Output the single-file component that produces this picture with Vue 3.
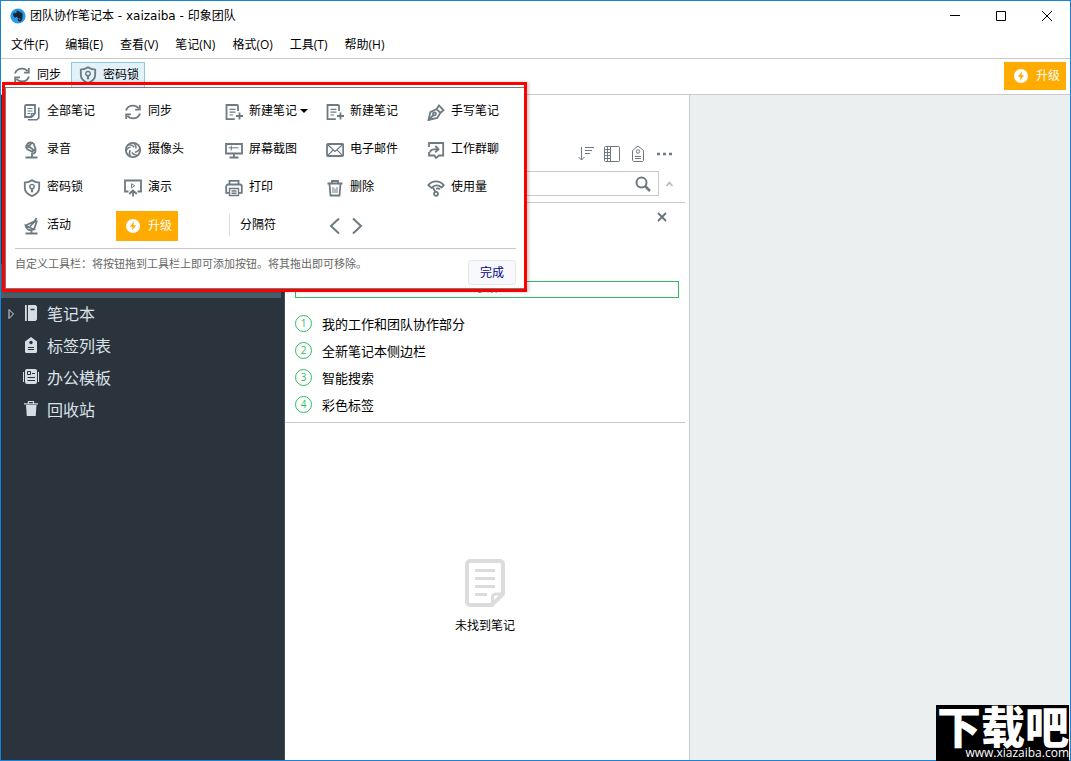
<script setup>
import { h } from 'vue'

const menus = ['文件(F)', '编辑(E)', '查看(V)', '笔记(N)', '格式(O)', '工具(T)', '帮助(H)']

const art = {
  notes: '<path d="M2 14V3.500a1.500 1.500 0 0 1 1.500-1.500h8.500v8.500l-3.500 3.500z"/><path d="M4.800 16.800h9l2-2V4.500" stroke-width="1.600"/><path d="M4.500 5.500h5M4.500 8h5M4.500 10.500h2.500M8.300 14v-3.500h3.500" stroke-width="1.200"/>',
  sync: '<path d="M2 7.500C3 4.500 5.800 2.600 9 2.600c2.400 0 4.300 1 5.600 2.700M16 10.500c-1 3-3.800 4.900-7 4.900-2.400 0-4.300-1-5.600-2.700"/><path d="M15.800 2v4.700h-4.700M2.200 16v-4.700h4.700"/>',
  addnote: '<path d="M13 8V3a1 1 0 0 0-1-1H1.500v14.200h8.300"/><path d="M4.500 6.300h6M4.500 9.200h6M4.500 12h3.500" stroke-width="1.200"/><path d="M14.500 9.500v7M11 13h7"/>',
  pen: '<path d="M1.500 17 3.300 9.200 9.600 6l3.800 3.800L10.200 15z"/><path d="m9.600 6 2.400-3.500 4.500 4.600-3.100 2.700M1.500 17l5-5"/><circle cx="7.500" cy="10.800" r="1.500"/>',
  mic: '<path d="M4 3.500C5.500 1 9 .8 10.800 3l1.700 5-3.200 2.700-5-2.500C3 7 3 5 4 3.500z"/><path d="m4 3.800 6.500 5.200M8.700 1.800l-4.200 5M12.300 8.500c.9 2.200-.3 4-3.300 4.200v4M2.500 16.500h12"/>',
  camera: '<circle cx="9" cy="9" r="7.200"/><path d="M9 1.800c2.300 1.300 3.300 3 3 5.700M15.800 7c-.8 2.500-2.200 3.800-4.900 4.200M13.800 14.200c-2.600.4-4.400-.5-6-2.700M6.500 15.700c-1.500-2.200-1.600-4.100-.3-6.500M2 10.500c.6-2.600 1.800-4 4.500-4.600M4 4c2.500-.6 4.500 0 6.200 2.200" stroke-width="1.500"/>',
  screen: '<path d="M1 3h16v9.500H1zM9 12.500v4M4.500 16.500h9"/><path d="M3.500 6.800h10M6.300 4.600v5" stroke-width="1"/>',
  mail: '<rect x="1" y="3" width="16.200" height="12" rx="1"/><path d="m2 4 7 6.500L16.200 4M2 14.200l5-5M16.200 14.200l-5-5" stroke-width="1.200"/>',
  chat: '<path d="M2 6V2h14.200v12.500h-4L9 17l-1.500-2.500H2V11"/><path d="M3 11.500c.2-2.500 2.500-3.500 7.500-3.300M8.300 5l3.200 3.200-3.200 3.200"/>',
  lock: '<path d="M9 1.200c2.200 1.600 4.500 2.200 7.200 2.400v5.200c0 4-3 6.700-7.200 8.300-4.200-1.600-7.200-4.300-7.200-8.300V3.600C4.500 3.400 6.800 2.800 9 1.200z"/><circle cx="9" cy="7.600" r="2.200" stroke-width="1.400"/><path d="M9 9.500v3.800" stroke-width="2.200"/>',
  present: '<path d="M4.500 12.500H1V1.500h16v11h-3.500"/><path d="M7.500 4.700v4.200l3.300-2.100z" stroke-width="1"/><path d="M9 17.500v-5.500M5.200 15 9 11.500l3.800 3.500"/>',
  print: '<path d="M4.500 5.500V1.800h9v3.700M4 13.800H1.200V7.500c0-1.200.8-2 2-2h11.600c1.200 0 2 .8 2 2v6.300H14"/><path d="M4.500 9.500h9v7h-9zM6.500 12h5M6.500 14.200h5" stroke-width="1.400"/>',
  trash: '<path d="M1.500 4.500h15M6 4.200V2h6v2.200M3.500 5l1 11.500h9l1-11.500"/><path d="M7 8v6M9 9.500V14M11 8v6" stroke-width="1"/>',
  usage: '<path d="M1.300 6.200C5.500 1.200 12.500 1.200 16.700 6.200l-2 2.300C11 5.500 8 5.500 4.500 8.800zM5.500 8l3 5M9 9.800c1.500-.6 2.700-.5 4 .5"/><circle cx="9" cy="14.800" r="2"/>',
  dish: '<path d="M2.500 8.500C3 12.500 6.500 14 11 12.500zM2.500 8.500 12 4M11 12.500l3-9M11 5.500 13.500 1M7 9.500l6-6.500M8.500 13v3.500M2.500 16.500h12"/>',
  bolt: '<circle cx="9" cy="9" r="7" fill="#fff" stroke="none"/><path d="M10 4.500 5.800 9.800h2.700L8 13.500l4.200-5.300H9.500z" fill="#ffab00" stroke="none"/>'
}

const Icon = (props) =>
  h('svg', {
    class: 'icon', viewBox: '0 0 18 18', width: 18, height: 18, fill: 'none',
    stroke: 'currentColor', 'stroke-width': 1.8, 'aria-hidden': 'true', innerHTML: art[props.name]
  })
Icon.props = ['name']

const tools = [
  { icon: 'notes', label: '全部笔记' },
  { icon: 'sync', label: '同步' },
  { icon: 'addnote', label: '新建笔记', drop: true },
  { icon: 'addnote', label: '新建笔记' },
  { icon: 'pen', label: '手写笔记' },
  { icon: 'mic', label: '录音' },
  { icon: 'camera', label: '摄像头' },
  { icon: 'screen', label: '屏幕截图' },
  { icon: 'mail', label: '电子邮件' },
  { icon: 'chat', label: '工作群聊' },
  { icon: 'lock', label: '密码锁' },
  { icon: 'present', label: '演示' },
  { icon: 'print', label: '打印' },
  { icon: 'trash', label: '删除' },
  { icon: 'usage', label: '使用量' },
  { icon: 'dish', label: '活动' }
]

const features = ['我的工作和团队协作部分', '全新笔记本侧边栏', '智能搜索', '彩色标签']
</script>

<template>
  <div class="window">
    <header class="titlebar">
      <svg class="logo" viewBox="0 0 16 16" width="16" height="16" aria-hidden="true">
        <circle cx="8" cy="8" r="7.600" fill="#249cf2" />
        <path d="M5.300 3.300 3 5.800c.3 2.300.8 3.600 2 3.800 1 .2 1.600-.2 1.800-.8.2 1 .9 1.200 2 1.200 1.300.1 1.600.7 1.500 1.700H9.200c-.4-.7-.1-1.200.6-1.200-1.300-.5-2.200.3-2 1.500.2 1.300 1.300 1.700 2.500 1.500 2-.3 2.500-4 2.200-7.500-.1-1.300-1-1.600-2.200-1.700C9.500 3.200 8 2.600 6.500 2.800v2.400H4.200z" fill="#1d2630" />
      </svg>
      <h1>团队协作笔记本 - xaizaiba - 印象团队</h1>
      <div class="controls">
        <button aria-label="最小化"><svg width="12" height="12" viewBox="0 0 12 12"><path d="M1 5.500h10" /></svg></button>
        <button aria-label="最大化"><svg width="12" height="12" viewBox="0 0 12 12"><path d="M1.500 1.500h9v9h-9z" /></svg></button>
        <button aria-label="关闭"><svg width="12" height="12" viewBox="0 0 12 12"><path d="m1 1 10 10M11 1 1 11" /></svg></button>
      </div>
    </header>

    <nav class="menubar">
      <button v-for="m in menus" :key="m">{{ m }}</button>
    </nav>

    <div class="toolbar">
      <button class="tool"><Icon name="sync" />同步</button>
      <button class="tool active"><Icon name="lock" />密码锁</button>
      <button class="upgrade"><Icon name="bolt" />升级</button>
    </div>

    <main class="body">
      <nav class="sidebar">
        <div class="selected"></div>
        <a href="#">
          <svg class="twisty" width="7" height="12" viewBox="0 0 7 12"><path d="M1 1.500 5.500 6 1 10.500z" fill="none" stroke="#d0d8de" /></svg>
          <svg class="glyph" width="16" height="18" viewBox="0 0 16 18"><path d="M2 1h1.800v16H2zM5 1h7.500L14 2.500v13L12.500 17H5z" fill="#d5dde3" /><path d="M7.500 5.500h4" stroke="#2b333d" stroke-width="1.500" /></svg>笔记本</a>
        <a href="#">
          <svg class="glyph" width="16" height="18" viewBox="0 0 16 18"><path d="m8 1 6 4.500V16l-1 1H3l-1-1V5.500z" fill="#d5dde3" /><circle cx="8" cy="6.500" r="1.700" fill="#2b333d" /><path d="M5 11.500h6M5 13.500h6" stroke="#2b333d" /></svg>标签列表</a>
        <a href="#">
          <svg class="glyph" width="16" height="18" viewBox="0 0 16 18"><rect x="2" y="1" width="12" height="15" rx="2" fill="#d5dde3" /><path d="M.5 4v10M15.500 4v10" stroke="#d5dde3" /><path d="M4.500 3.500h3v3h-3zM9 5.500h3M4.500 9.500h7.500M4.500 12.500h7.500" fill="none" stroke="#2b333d" /></svg>办公模板</a>
        <a href="#">
          <svg class="glyph" width="16" height="18" viewBox="0 0 16 18"><path d="M3 5h10.500l-.8 11H3.800z" fill="#d5dde3" /><path d="M1 3.800h14M5.500 3.500V1.500h5v2" fill="none" stroke="#d5dde3" stroke-width="1.200" /></svg>回收站</a>
      </nav>

      <section class="notes">
        <div class="listbar">
          <button aria-label="排序"><svg width="18" height="18" viewBox="0 0 18 18"><path d="M4.500 2v13M1.500 12l3 3 3-3M8 2.500h9M8 5.500h7M8 8.500h5" /></svg></button>
          <button aria-label="视图"><svg width="18" height="18" viewBox="0 0 18 18"><rect x="1.500" y="1.500" width="15" height="15" rx="1" /><path d="M7.500 1.500v15M4.500 1.500v15M1.500 4.500h6M1.500 7.500h6M1.500 10.500h6M1.500 13.500h6" /></svg></button>
          <button aria-label="标签"><svg width="18" height="18" viewBox="0 0 18 18"><path d="m9 1 5.500 4.500v10l-1 1h-9l-1-1v-10z" /><circle cx="9" cy="6.500" r="1.700" /><path d="M6 11.500h6M6 13.500h6" /></svg></button>
          <button aria-label="更多"><svg width="18" height="18" viewBox="0 0 18 18"><path d="M2 9h3M8 9h3M14 9h3" stroke-width="2.500" /></svg></button>
        </div>
        <div class="searchrow">
          <label class="search">
            <input type="text" aria-label="搜索笔记" />
            <svg width="18" height="18" viewBox="0 0 18 18"><circle cx="7.500" cy="7.500" r="5" fill="none" stroke="#6d7a82" stroke-width="2" /><path d="m11 11 5 5" stroke="#6d7a82" stroke-width="2.500" /></svg>
          </label>
          <button aria-label="收起"><svg width="9" height="8" viewBox="0 0 9 8"><path d="m1.500 6 3-3.500 3 3.500" fill="none" stroke="#b3b8bb" stroke-width="1.500" /></svg></button>
        </div>
        <div class="guide">
          <button class="close" aria-label="关闭"><svg width="12" height="12" viewBox="0 0 12 12"><path d="m2 2 8 8M10 2l-8 8" stroke="#66737b" stroke-width="1.800" /></svg></button>
          <button class="learn">了解</button>
          <ol>
            <li v-for="(f, i) in features" :key="f"><span class="num">{{ i + 1 }}</span>{{ f }}</li>
          </ol>
        </div>
        <div class="empty">
          <svg width="40" height="48" viewBox="0 0 40 48" fill="none" stroke="#dcdcdc" stroke-width="4"><path d="M27 46H5a3 3 0 0 1-3-3V5a3 3 0 0 1 3-3h30a3 3 0 0 1 3 3v30z" /><path d="M27.500 46V38a3 3 0 0 1 3-3H38" stroke-width="3" /><path d="M10 11.500h20M10 19.500h20M10 27.500h20M10 35.500h12" stroke-width="3" /></svg>
          <p>未找到笔记</p>
        </div>
      </section>

      <section class="detail"></section>
    </main>

    <div class="frame">
      <section class="customize">
        <div class="palette">
          <button v-for="(t, i) in tools" :key="i" class="item">
            <Icon :name="t.icon" />{{ t.label }}<i v-if="t.drop" class="caret"></i>
          </button>
          <button class="upgrade"><Icon name="bolt" />升级</button>
          <button class="item divider">分隔符</button>
          <div class="arrows">
            <button aria-label="后退"><svg width="11" height="18" viewBox="0 0 11 18"><path d="M10 1.500 2 9l8 7.500" /></svg></button>
            <button aria-label="前进"><svg width="11" height="18" viewBox="0 0 11 18"><path d="M1 1.500 9 9l-8 7.500" /></svg></button>
          </div>
        </div>
        <footer>
          <p>自定义工具栏：将按钮拖到工具栏上即可添加按钮。将其拖出即可移除。</p>
          <button class="done">完成</button>
        </footer>
      </section>
    </div>

    <div class="watermark">
      <strong>下载吧</strong>
      <span>www.xiazaiba.com</span>
    </div>
  </div>
</template>

<style>
body {
  margin: 0;
}
</style>

<style scoped>
* {
  box-sizing: border-box;
}
.window {
  position: relative;
  display: flex;
  flex-direction: column;
  min-height: 100vh;
  border: 1px solid #1883d7;
  background: #fff;
  color: #000;
  font: 12px/18px "Open Sans", "Noto Sans CJK SC", sans-serif;
}
button {
  display: flex;
  align-items: center;
  padding: 0;
  border: 0;
  background: none;
  color: inherit;
  font: inherit;
  white-space: nowrap;
}
svg {
  flex: none;
  display: block;
}
.titlebar {
  display: flex;
  align-items: center;
  height: 29px;
  padding-left: 9px;
}
.titlebar h1 {
  margin: 0 0 0 4px;
  font: 400 12px/18px "DejaVu Sans", "Noto Sans CJK SC", sans-serif;
}
.controls {
  display: flex;
  margin-left: auto;
}
.controls button {
  justify-content: center;
  width: 46px;
  height: 29px;
}
.controls path {
  fill: none;
  stroke: #000;
}
.menubar {
  display: flex;
  gap: 17px;
  height: 29px;
  padding: 2px 0 0 10px;
  border-bottom: 1px solid #c9c9c9;
}
.toolbar {
  display: flex;
  align-items: flex-start;
  height: 36px;
  padding: 3px 4px 0;
  border-bottom: 1px solid #c9c9c9;
}
.icon {
  color: #6d7a82;
}
.tool {
  gap: 6px;
  height: 26px;
  padding: 0 7px;
  border: 1px solid transparent;
}
.tool.active {
  margin-left: 2px;
  padding: 0 5px 0 7px;
  border-color: #8ccae4;
  background: #e3f1f9;
}
.upgrade {
  gap: 6px;
  height: 28px;
  padding: 0 6px 0 8px;
  background: #ffab00;
  color: #fff;
}
.toolbar .upgrade {
  margin-left: auto;
}
.body {
  display: flex;
  flex: 1;
}
.sidebar {
  flex: none;
  width: 284px;
  padding-top: 169px;
  border-right: 1px solid #47515c;
  background: #2b333d;
}
.selected {
  height: 34px;
  margin-right: 3px;
  background: #495d68;
}
.sidebar a {
  position: relative;
  display: flex;
  align-items: center;
  gap: 8px;
  height: 32px;
  padding-left: 22px;
  color: #dbe2e7;
  font-size: 16px;
  text-decoration: none;
}
.glyph {
  margin-bottom: 2px;
}
.twisty {
  position: absolute;
  left: 7px;
}
.notes {
  display: flex;
  flex: none;
  flex-direction: column;
  width: 405px;
  border-right: 1px solid #c9c9c9;
}
.listbar {
  display: flex;
  justify-content: flex-end;
  gap: 8px;
  padding: 50px 16px 8px 0;
}
.listbar svg {
  fill: none;
  stroke: #6d7a82;
}
.searchrow {
  display: flex;
  margin-right: 4px;
  padding: 0 11px 6px 10px;
  border-bottom: 1px solid #c9c9c9;
}
.search {
  display: flex;
  flex: 1;
  align-items: center;
  height: 25px;
  margin-right: 6px;
  padding-right: 6px;
  border: 1px solid #c9c9c9;
}
.search input {
  flex: 1;
  min-width: 0;
  border: 0;
  outline: 0;
  background: none;
  font: inherit;
}
.guide {
  display: flex;
  flex-direction: column;
  margin-right: 4px;
  padding: 8px 6px 4px 10px;
  border-bottom: 1px solid #c9c9c9;
}
.close {
  align-self: flex-end;
  margin-right: 11px;
}
.learn {
  justify-content: center;
  height: 17px;
  margin: 58px 0 12px;
  padding-bottom: 4px;
  border: 1px solid #2dbe60;
  color: #2dbe60;
}
.guide ol {
  margin: 0;
  padding: 0;
  list-style: none;
}
.guide li {
  display: flex;
  align-items: center;
  gap: 10px;
  height: 27px;
  font-size: 13px;
}
.num {
  width: 17px;
  height: 17px;
  border: 1px solid #2dbe60;
  border-radius: 50%;
  color: #2dbe60;
  font-size: 10px;
  line-height: 15px;
  text-align: center;
}
.empty {
  display: flex;
  flex-direction: column;
  align-items: center;
  gap: 10px;
  margin-right: 4px;
  padding-top: 136px;
}
.empty p {
  margin: 0;
}
.detail {
  flex: 1;
  background: #ebeff0;
}
.frame {
  position: absolute;
  top: 81px;
  left: 1px;
  width: 525px;
  padding-top: 2px;
  border: 3px solid #f00;
  box-shadow: 2px 0 3px rgba(0, 0, 0, 0.2);
}
.customize {
  padding: 4px 8px 3px 9px;
  border: 1px solid #7a7a7a;
  border-right: 0;
  background: #fff;
}
.palette {
  display: grid;
  grid-template-columns: repeat(5, 101px);
  grid-auto-rows: 38px;
  align-items: center;
  margin-bottom: 4px;
}
.item {
  gap: 6px;
  padding-left: 8px;
}
.item .icon,
.arrows {
  margin-top: 2px;
}
.caret {
  width: 7px;
  margin-left: -3px;
  border: 4px solid transparent;
  border-top-color: #000;
  border-bottom: 0;
}
.palette .upgrade {
  justify-self: start;
  height: 30px;
  margin-top: 2px;
}
.divider {
  height: 22px;
  margin-left: 12px;
  padding-left: 10px;
  border-left: 1px solid #dcdcdc;
}
.arrows {
  display: flex;
  gap: 12px;
  padding-left: 11px;
}
.arrows path {
  fill: none;
  stroke: #6d7a82;
  stroke-width: 2;
}
.customize footer {
  display: flex;
  justify-content: space-between;
  border-top: 1px solid #c9c9c9;
}
.customize p {
  margin: 6px 0 0;
  color: #666;
  font-size: 11px;
}
.done {
  justify-content: center;
  width: 48px;
  height: 25px;
  margin-top: 11px;
  border: 1px solid #e3e8ec;
  border-radius: 3px;
  background: #f7f9fc;
  color: #00008b;
}
.watermark {
  position: absolute;
  right: 1px;
  bottom: -1px;
  display: flex;
  flex-direction: column;
  align-items: flex-end;
  padding-left: 1px;
  background: #000;
  color: #fff;
}
.watermark strong {
  font: 900 44px/40px "Noto Sans CJK SC", sans-serif;
}
.watermark span {
  line-height: 16px;
}
</style>
